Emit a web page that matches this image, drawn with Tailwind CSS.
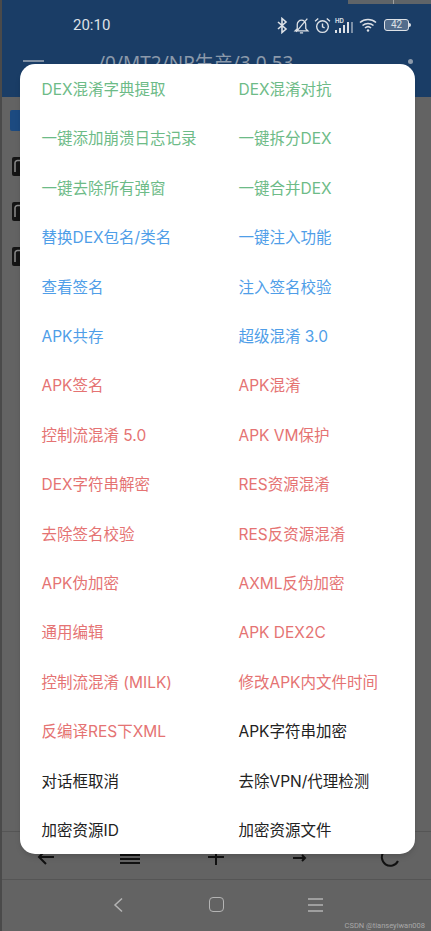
<!DOCTYPE html>
<html lang="zh">
<head>
  <meta charset="UTF-8" />
  <meta name="viewport" content="width=device-width, initial-scale=1.0"/>
  <title>MT2</title>
  <script src="https://cdn.jsdelivr.net/npm/@tailwindcss/browser@4"></script>
</head>
<body class="bg-[#636363] font-['Inter','Noto_Sans_CJK_SC',sans-serif]">
<div class="relative w-[431px] h-[931px] overflow-hidden flex flex-col border-l-2 border-[#4a4a4a]">

  <!-- Strip of the window behind, top right -->
  <div class="absolute top-0 right-0 w-[83px] h-[4px] bg-[#5f6468]">
    <div class="w-[1px] h-full ml-[45px] bg-[#a0a0a0]"></div>
  </div>

  <!-- App bar with status bar -->
  <header class="h-[97px] bg-[#1a3d66] shrink-0 flex flex-col">
    <div class="h-[50px] flex items-center pl-[71px] pr-[20px] justify-between text-[#dde1e6]">
      <span class="text-[15px] font-['Roboto']">20:10</span>
      <div class="flex items-center gap-[4px]">
        <!-- bluetooth -->
        <svg class="w-[14px] h-[17px]" viewBox="0 0 14 16" fill="none" stroke="currentColor" stroke-width="1.6"><path d="M3 4.5l8 7-4 3.5V1l4 3.5-8 7"/></svg>
        <!-- muted bell -->
        <svg class="w-[17px] h-[17px]" viewBox="0 0 16 16" fill="none" stroke="currentColor" stroke-width="1.2"><path d="M2 13h12l-2-2V7a4 4 0 0 0-8 0v4zM6.5 15h3M13.5 1.5L3 14"/></svg>
        <!-- alarm -->
        <svg class="w-[17px] h-[17px]" viewBox="0 0 16 16" fill="none" stroke="currentColor" stroke-width="1.3"><circle cx="8" cy="9" r="5.5"/><path d="M8 6v3.2l2 1M1 4l3-2.5M15 4l-3-2.5"/></svg>
        <!-- signal -->
        <div class="relative w-[20px] h-[15px] flex items-end gap-[2px]">
          <span class="absolute -top-[1px] left-0 text-[6px] leading-[7px] font-bold">HD</span>
          <span class="w-[2px] h-[3px] bg-current"></span>
          <span class="w-[2px] h-[5px] bg-current"></span>
          <span class="w-[2px] h-[8px] bg-current"></span>
          <span class="w-[2px] h-[11px] bg-current"></span>
          <span class="w-[2px] h-[11px] bg-current opacity-50"></span>
        </div>
        <!-- wifi -->
        <svg class="w-[18px] h-[14px]" viewBox="0 0 18 14" fill="none" stroke="currentColor" stroke-width="1.6"><path d="M1 4.5a12 12 0 0 1 16 0M3.5 7.5a8.5 8.5 0 0 1 11 0M6 10a4.5 4.5 0 0 1 6 0"/><circle cx="9" cy="12.5" r="1.2" fill="currentColor" stroke="none"/></svg>
        <!-- battery -->
        <div class="flex items-center ml-[3px]">
          <div class="w-[25px] h-[12px] border border-current rounded-[3px] flex items-center justify-center text-[10px] leading-none font-['Roboto'] bg-white/25">42</div>
          <span class="w-[2px] h-[4px] bg-current rounded-r-sm"></span>
        </div>
      </div>
    </div>
    <div class="flex items-start pl-[21px] pr-[18px]">
      <div class="w-[21px] mt-[10px] h-[2px] bg-[#7f8fa3]"></div>
      <span class="ml-[54px] text-[19px] leading-[26px] font-['Noto_Sans','Noto_Sans_CJK_SC'] text-[#8b99aa] whitespace-nowrap">/0/MT2/NP生产/3.0.53</span>
      <div class="ml-auto mt-[9px] w-[5px] h-[5px] rounded-full bg-[#8b99aa]"></div>
    </div>
  </header>

  <!-- File list behind dialog -->
  <main class="flex-1 pt-[13px] pl-[8px]">
    <div class="w-[12px] h-[21px] bg-[#1c4a80] rounded-[2px]"></div>
    <div class="mt-[26px] ml-[2px] flex flex-col gap-[26px]">
      <svg class="w-[10px] h-[19px]" viewBox="0 0 10 19"><rect x="0" width="14" height="19" rx="2" fill="#141414"/><path d="M3 15V6a2.5 2.5 0 0 1 2.5-2.5H10" fill="none" stroke="#8a8a8a" stroke-width="1.5"/></svg>
      <svg class="w-[10px] h-[19px]" viewBox="0 0 10 19"><rect x="0" width="14" height="19" rx="2" fill="#141414"/><path d="M3 15V6a2.5 2.5 0 0 1 2.5-2.5H10" fill="none" stroke="#8a8a8a" stroke-width="1.5"/></svg>
      <svg class="w-[10px] h-[19px]" viewBox="0 0 10 19"><rect x="0" width="14" height="19" rx="2" fill="#141414"/><path d="M3 15V6a2.5 2.5 0 0 1 2.5-2.5H10" fill="none" stroke="#8a8a8a" stroke-width="1.5"/></svg>
    </div>
  </main>

  <!-- Bottom toolbar -->
  <div class="h-[49px] shrink-0 border-y border-[#555] flex items-center justify-between pl-[35px] pr-[31px] pt-[3px] text-[#111]">
    <svg class="w-[17px] h-[20px]" viewBox="0 0 17 20" fill="none" stroke="currentColor" stroke-width="2"><path d="M17 10H2M9 3l-7 7 7 7"/></svg>
    <svg class="w-[20px] h-[20px]" viewBox="0 0 20 20" fill="none" stroke="currentColor" stroke-width="2"><path d="M0 8h20M0 12h20M0 16h20"/></svg>
    <svg class="w-[20px] h-[20px]" viewBox="0 0 20 20" fill="none" stroke="currentColor" stroke-width="2"><path d="M2 10h16M10 2v16"/></svg>
    <svg class="w-[22px] h-[20px]" viewBox="0 0 22 20" fill="none" stroke="currentColor" stroke-width="2"><path d="M1 11h12M10 8l3 3-3 3M14 5l7-5"/></svg>
    <svg class="w-[20px] h-[20px]" viewBox="0 0 20 20" fill="none" stroke="currentColor" stroke-width="2"><path d="M17 5a8.5 8.5 0 1 0 1 9"/></svg>
  </div>

  <!-- Nav bar -->
  <nav class="relative h-[51px] shrink-0 flex items-center justify-center gap-[84px] pl-[1px] pb-[2px] text-[#b4b4b4]">
    <svg class="w-[14px] h-[16px]" viewBox="0 0 14 16" fill="none" stroke="currentColor" stroke-width="1.5"><path d="M11 1.5L4 8l7 6.5"/></svg>
    <div class="w-[15px] h-[15px] border-[1.5px] border-current rounded-[4px]"></div>
    <svg class="w-[15px] h-[16px]" viewBox="0 0 15 16" fill="none" stroke="currentColor" stroke-width="1.5"><path d="M0 2h15M0 8h15M0 14h15"/></svg>
    <span class="absolute right-[6px] bottom-0 text-[7.5px] leading-[10px] font-['Roboto'] text-[#a8a8a8]">CSDN @tianseyiwan008</span>
  </nav>

  <!-- Dialog -->
  <div class="absolute left-[17.5px] top-[64px] w-[395px] h-[790px] bg-white rounded-[15px] shadow-md pl-[22px] pt-[1px] grid grid-cols-[197px_1fr] auto-rows-[49.4px] items-center text-[15.5px] whitespace-nowrap">
    <span class="text-[#6dbb87]">DEX混淆字典提取</span>
    <span class="text-[#6dbb87]">DEX混淆对抗</span>
    <span class="text-[#6dbb87]">一键添加崩溃日志记录</span>
    <span class="text-[#6dbb87]">一键拆分DEX</span>
    <span class="text-[#6dbb87]">一键去除所有弹窗</span>
    <span class="text-[#6dbb87]">一键合并DEX</span>
    <span class="text-[#4f9ee8]">替换DEX包名/类名</span>
    <span class="text-[#4f9ee8]">一键注入功能</span>
    <span class="text-[#4f9ee8]">查看签名</span>
    <span class="text-[#4f9ee8]">注入签名校验</span>
    <span class="text-[#4f9ee8]">APK共存</span>
    <span class="text-[#4f9ee8]">超级混淆 3.0</span>
    <span class="text-[#e57373]">APK签名</span>
    <span class="text-[#e57373]">APK混淆</span>
    <span class="text-[#e57373]">控制流混淆 5.0</span>
    <span class="text-[#e57373]">APK VM保护</span>
    <span class="text-[#e57373]">DEX字符串解密</span>
    <span class="text-[#e57373]">RES资源混淆</span>
    <span class="text-[#e57373]">去除签名校验</span>
    <span class="text-[#e57373]">RES反资源混淆</span>
    <span class="text-[#e57373]">APK伪加密</span>
    <span class="text-[#e57373]">AXML反伪加密</span>
    <span class="text-[#e57373]">通用编辑</span>
    <span class="text-[#e57373]">APK DEX2C</span>
    <span class="text-[#e57373]">控制流混淆 (MILK)</span>
    <span class="text-[#e57373]">修改APK内文件时间</span>
    <span class="text-[#e57373]">反编译RES下XML</span>
    <span class="text-[#222]">APK字符串加密</span>
    <span class="text-[#222]">对话框取消</span>
    <span class="text-[#222]">去除VPN/代理检测</span>
    <span class="text-[#222]">加密资源ID</span>
    <span class="text-[#222]">加密资源文件</span>
  </div>
</div>
</body>
</html>
